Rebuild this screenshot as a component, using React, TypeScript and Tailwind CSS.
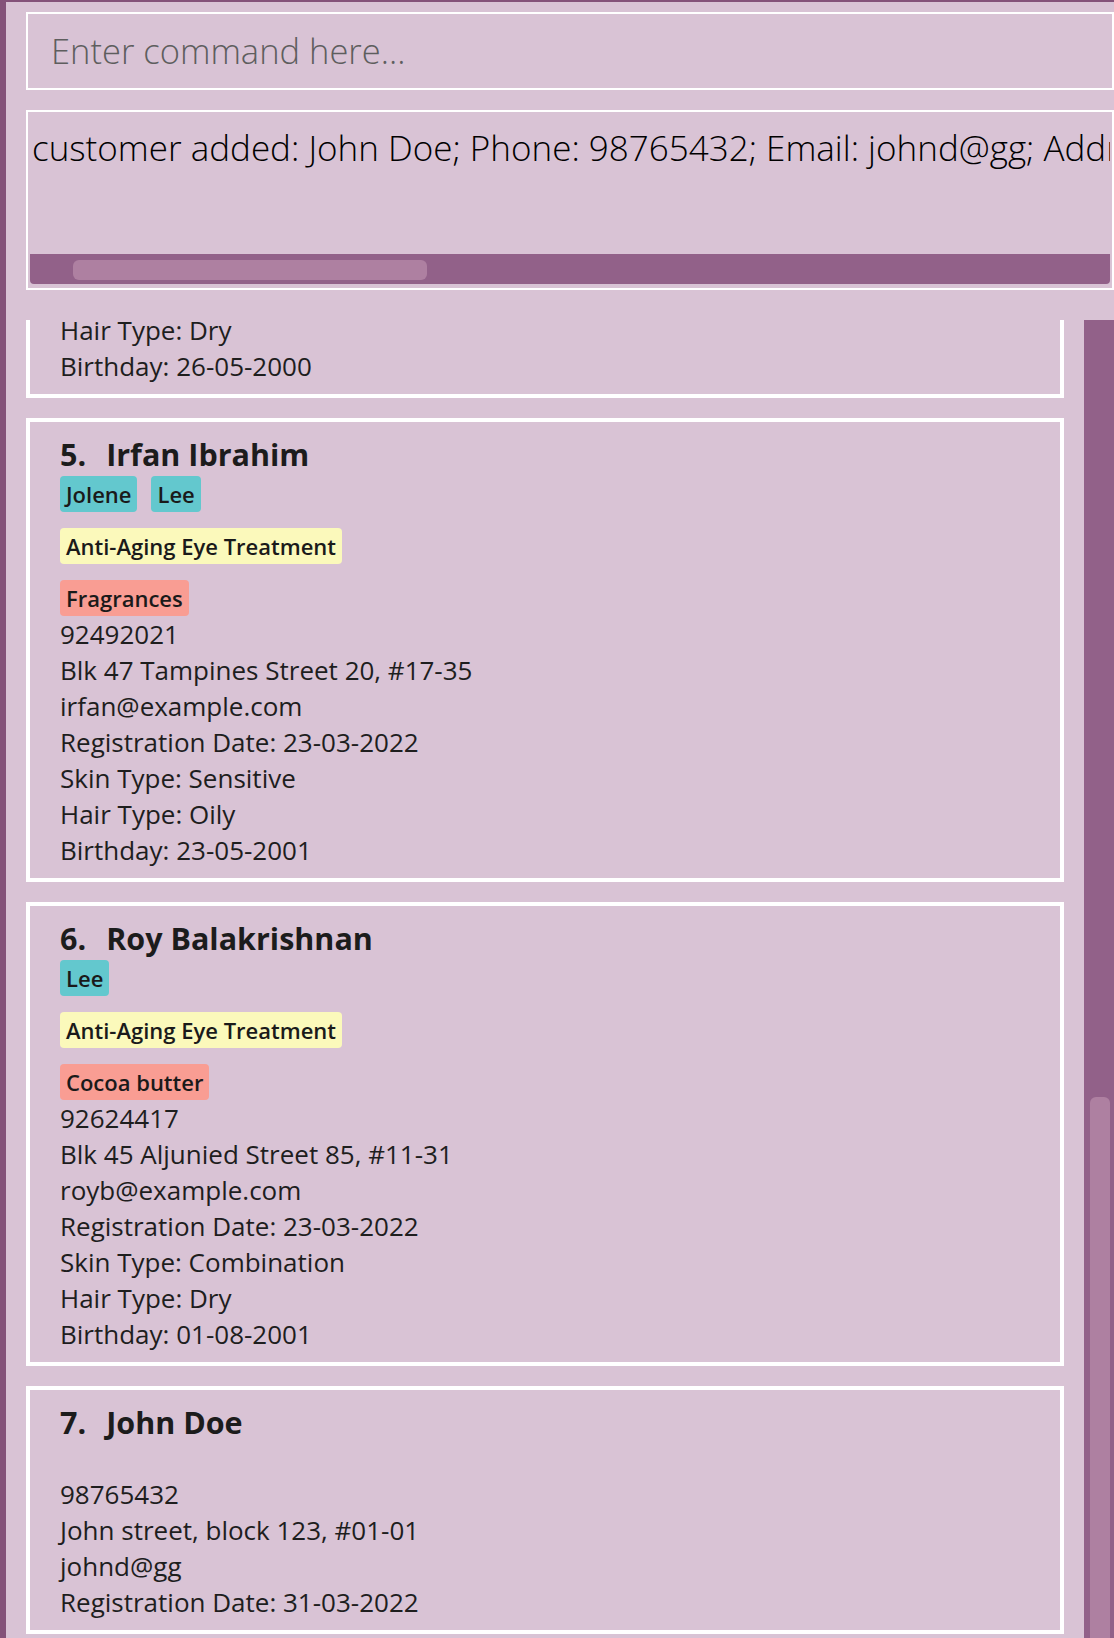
import React from "react";

type Customer = {
  id: number;
  name: string;
  people: string[];
  services: string[];
  products: string[];
  lines: string[];
};

const customers: Customer[] = [
  {
    id: 5,
    name: "Irfan Ibrahim",
    people: ["Jolene", "Lee"],
    services: ["Anti-Aging Eye Treatment"],
    products: ["Fragrances"],
    lines: [
      "92492021",
      "Blk 47 Tampines Street 20, #17-35",
      "irfan@example.com",
      "Registration Date: 23-03-2022",
      "Skin Type: Sensitive",
      "Hair Type: Oily",
      "Birthday: 23-05-2001",
    ],
  },
  {
    id: 6,
    name: "Roy Balakrishnan",
    people: ["Lee"],
    services: ["Anti-Aging Eye Treatment"],
    products: ["Cocoa butter"],
    lines: [
      "92624417",
      "Blk 45 Aljunied Street 85, #11-31",
      "royb@example.com",
      "Registration Date: 23-03-2022",
      "Skin Type: Combination",
      "Hair Type: Dry",
      "Birthday: 01-08-2001",
    ],
  },
  {
    id: 7,
    name: "John Doe",
    people: [],
    services: [],
    products: [],
    lines: [
      "98765432",
      "John street, block 123, #01-01",
      "johnd@gg",
      "Registration Date: 31-03-2022",
    ],
  },
];

function Tag({ label, color }: { label: string; color: string }) {
  return (
    <span
      className={`${color} rounded-[4px] px-[6px] py-[3px] text-[22px] leading-[30px] font-semibold text-[#1a1a1a]`}
    >
      {label}
    </span>
  );
}

function CustomerCard({ c }: { c: Customer }) {
  return (
    <div className="border-4 border-white pl-[30px] pt-[10px] pb-[10px]">
      {/* name row */}
      <div className="flex gap-[20px] text-[30.5px] leading-[44px] font-bold text-[#1c1c1c]">
        <span>{c.id}.</span>
        <span>{c.name}</span>
      </div>

      {/* tags */}
      <div className="flex flex-col gap-4">
        <div className="flex gap-[14px]">
          {c.people.map((p) => (
            <Tag key={p} label={p} color="bg-[#63c8ce]" />
          ))}
        </div>
        <div className="flex gap-[14px]">
          {c.services.map((s) => (
            <Tag key={s} label={s} color="bg-[#fbf9bb]" />
          ))}
        </div>
        <div className="flex gap-[14px]">
          {c.products.map((p) => (
            <Tag key={p} label={p} color="bg-[#f99d93]" />
          ))}
        </div>
      </div>

      {/* details */}
      <div className="text-[26px] leading-[36px] text-[#1e1e1e]">
        {c.lines.map((l) => (
          <div key={l}>{l}</div>
        ))}
      </div>
    </div>
  );
}

export default function App() {
  return (
    <div
      className="w-[1114px] h-[1638px] bg-[#845279] pt-[2px] pl-[6px] overflow-hidden"
      style={{ fontFamily: '"Open Sans", "Noto Sans", sans-serif' }}
    >
      <div className="h-full bg-[#d9c3d5] flex flex-col pt-[10px]">
        {/* Command box */}
        <div className="ml-[20px] h-[78px] border-2 border-white flex items-center pl-[23px]">
          <span className="text-[34.5px] font-light text-[#5e5e5e] whitespace-nowrap">Enter command here...</span>
        </div>

        {/* Result box */}
        <div className="ml-[20px] mt-[20px] h-[180px] border-2 border-white flex flex-col px-[2px] pb-[4px]">
          <div className="flex-1 overflow-hidden pt-[10px] pl-[2px]">
            <div className="text-[35px] font-light text-black whitespace-nowrap">
              customer added: John Doe; Phone: 98765432; Email: johnd@gg; Address: John street, block 123, #01-01
            </div>
          </div>
          <div className="h-[30px] bg-[#926189] rounded-b-[4px] pl-[43px] pt-[6px]">
            <div className="w-[354px] h-[20px] bg-[#ae80a1] rounded-[6px]"></div>
          </div>
        </div>

        {/* Customer list */}
        <div className="mt-[30px] flex-1 flex gap-[20px] min-h-0">
          <div className="flex-1 ml-[20px] overflow-hidden">
            <div className="flex flex-col gap-[20px] -mt-[8px]">
              {/* partially scrolled card */}
              <div className="border-4 border-t-0 border-white pl-[30px] pb-[10px]">
                <div className="text-[26px] leading-[36px] text-[#1e1e1e]">
                  <div>Hair Type: Dry</div>
                  <div>Birthday: 26-05-2000</div>
                </div>
              </div>
              {customers.map((c) => (
                <CustomerCard key={c.id} c={c} />
              ))}
            </div>
          </div>

          {/* vertical scrollbar */}
          <div className="w-[30px] bg-[#926189] flex flex-col pl-[6px] pr-[4px] pt-[777px]">
            <div className="flex-1 bg-[#ae80a1] rounded-t-[6px]"></div>
          </div>
        </div>
      </div>
    </div>
  );
}
